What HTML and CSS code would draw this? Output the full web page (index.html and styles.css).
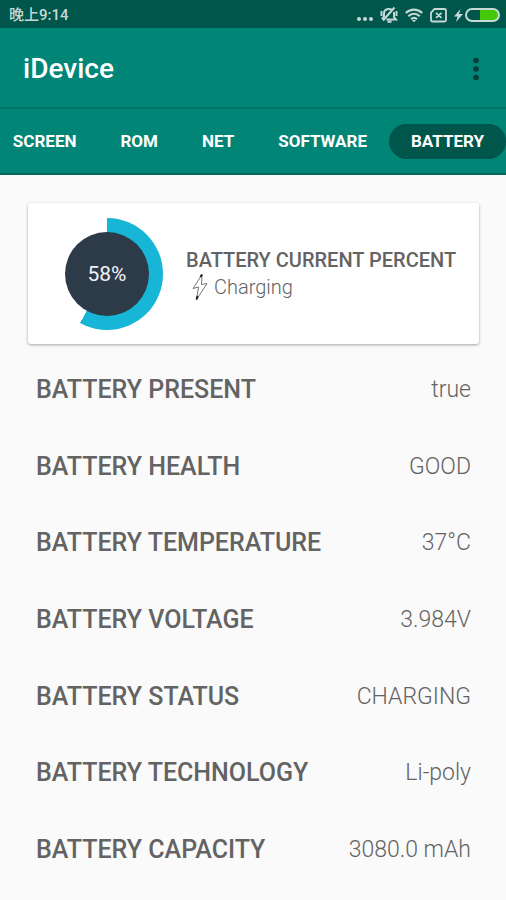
FILE: index.html
```html
<!DOCTYPE html>
<html lang="en">
<head>
<meta charset="utf-8">
<meta name="viewport" content="width=device-width, initial-scale=1">
<title>iDevice</title>
<link rel="stylesheet" href="styles.css">
</head>
<body>
<div class="status">
  <span class="clock" lang="zh">晚上9:14</span>
  <div class="status-icons">
    <svg width="16" height="18" viewBox="0 0 16 18" fill="currentColor" aria-hidden="true"><circle cx="2" cy="13" r="2"/><circle cx="8" cy="13" r="2"/><circle cx="14" cy="13" r="2"/></svg>
    <svg width="18" height="18" viewBox="0 0 18 18" fill="none" stroke="currentColor" stroke-width="2" aria-hidden="true"><path d="M4 11V7.500C4 4.500 6 3 9 3q1.500 0 2.500.5M14 6v5l2 2.500H6.500M3.500 11L2 13M7.500 15.800h4M1.500 5v5M16.500 5v5M3 14.500L14.500 1.500"/></svg>
    <svg width="18" height="18" viewBox="0 0 18 18" fill="none" stroke="currentColor" stroke-width="2.200" aria-hidden="true"><path d="M.8 7c4.800-4.400 11.600-4.400 16.400 0M3.300 10.200c3.400-3 8-3 11.400 0M6 13.200c1.800-1.500 4.200-1.500 6 0"/><path d="M7 14h4l-2 2.500z" fill="currentColor" stroke="none"/></svg>
    <svg width="17" height="18" viewBox="0 0 17 18" fill="none" stroke="currentColor" stroke-width="1.800" aria-hidden="true"><path d="M4.500 3h10q1.500 0 1.500 1.500v9.500q0 1.500-1.500 1.500h-12Q1 15.500 1 14V6.500zM6 6.800l5.500 5M11.500 6.800l-5.500 5"/></svg>
    <svg width="46" height="18" viewBox="0 0 46 18" aria-hidden="true"><path d="M6.500 3L0 10.500h3.500L2 16L9 8H5z" fill="currentColor"/><path d="M26 3.500h13a5.500 5.500 0 0 1 0 11H26z" fill="#46c80a"/><rect x="12" y="3" width="33" height="12" rx="6" fill="none" stroke="currentColor" stroke-width="2"/></svg>
  </div>
</div>
<header class="appbar">
  <h1>iDevice</h1>
  <button class="more" type="button" aria-label="More options"><svg width="6" height="24" viewBox="0 0 6 24" fill="currentColor"><circle cx="3" cy="3.500" r="2.800"/><circle cx="3" cy="12" r="2.800"/><circle cx="3" cy="20.500" r="2.800"/></svg></button>
</header>
<nav class="tabs">
  <a href="#screen">SCREEN</a>
  <a href="#rom">ROM</a>
  <a href="#net">NET</a>
  <a href="#software">SOFTWARE</a>
  <a class="active" href="#battery" aria-current="page">BATTERY</a>
</nav>
<main>
  <section class="card">
    <div class="gauge"><span>58%</span></div>
    <div class="summary">
      <h2>BATTERY CURRENT PERCENT</h2>
      <p><svg width="16" height="28" viewBox="0 0 16 28" fill="none" stroke="#777" stroke-width="1" stroke-linejoin="round" aria-hidden="true"><path d="M10 1.500L1 15.500l5.500-1.500L4.500 26.500L15 10.500l-5.500 1z"/><path d="M10 1.500L8.500 4M4.500 26.500L5.500 23" stroke="#222" stroke-width="2"/></svg>Charging</p>
    </div>
  </section>
  <dl class="details">
    <div><dt>BATTERY PRESENT</dt><dd>true</dd></div>
    <div><dt>BATTERY HEALTH</dt><dd>GOOD</dd></div>
    <div><dt>BATTERY TEMPERATURE</dt><dd>37°C</dd></div>
    <div><dt>BATTERY VOLTAGE</dt><dd>3.984V</dd></div>
    <div><dt>BATTERY STATUS</dt><dd>CHARGING</dd></div>
    <div><dt>BATTERY TECHNOLOGY</dt><dd>Li-poly</dd></div>
    <div><dt>BATTERY CAPACITY</dt><dd>3080.0 mAh</dd></div>
  </dl>
</main>
</body>
</html>
```

FILE: styles.css
```css
* { box-sizing: border-box; }
body {
  display: flex;
  flex-direction: column;
  margin: 0;
  min-height: 100vh;
  background: #fafafa;
  color: #636363;
  font-family: Roboto, "Noto Sans CJK SC", sans-serif;
  overflow-x: hidden;
}
h1, h2, p, dl, dd { margin: 0; }
svg { display: block; flex: none; }

.status {
  display: flex;
  align-items: center;
  justify-content: space-between;
  height: 28px;
  padding: 2px 6px 0 9px;
  background: #00564b;
  color: #c5dad7;
}
.clock { font-size: 15px; line-height: 26px; font-weight: 500; }
.status-icons { display: flex; align-items: center; gap: 7px; }

.appbar {
  display: flex;
  align-items: center;
  justify-content: space-between;
  height: 81px;
  padding: 2px 19px 0 23px;
  background: #008577;
  border-bottom: 2px solid #007468;
}
.appbar h1 { color: #fff; font-size: 28px; line-height: 32px; font-weight: 500; }
.more { display: flex; padding: 0 8px; border: 0; background: none; color: #063d36; }

.tabs {
  display: flex;
  align-items: center;
  justify-content: flex-end;
  height: 66px;
  background: #008577;
  border-bottom: 2px solid #00665b;
}
.tabs a {
  padding: 0 22px;
  border-radius: 18px;
  color: #fff;
  font-size: 17px;
  line-height: 35px;
  font-weight: 700;
  text-decoration: none;
}
.tabs .active { background: #00564b; }

main { display: flex; flex: 1; flex-direction: column; padding: 28px 27px 4px 28px; }
.card {
  display: flex;
  align-items: center;
  gap: 23px;
  height: 141px;
  padding-left: 23px;
  border-radius: 3px;
  background: #fff;
  box-shadow: 0 1px 3px rgba(0, 0, 0, .35);
}
.gauge {
  display: grid;
  place-items: center;
  flex: none;
  width: 112px;
  height: 112px;
  border-radius: 50%;
  background: conic-gradient(#17b5d6 58%, #fff 58%);
}
.gauge span {
  width: 84px;
  border-radius: 50%;
  background: #2d3a48;
  color: #f0f3f6;
  font-size: 21px;
  line-height: 84px;
  text-align: center;
}
.summary h2 { font-size: 20px; line-height: 26px; font-weight: 500; white-space: nowrap; }
.summary p { display: flex; align-items: center; gap: 6px; padding-left: 6px; font-size: 20px; line-height: 28px; font-weight: 300; }

.details { display: flex; flex: 1; flex-direction: column; padding: 8px; }
.details div { display: flex; flex: 1; align-items: center; justify-content: space-between; min-height: 64px; }
.details dt { font-size: 25px; line-height: 32px; font-weight: 500; }
.details dd { font-size: 23px; line-height: 32px; font-weight: 300; }
```
